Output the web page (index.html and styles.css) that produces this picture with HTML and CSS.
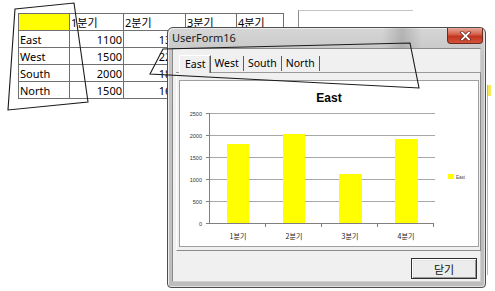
FILE: index.html
```html
<!DOCTYPE html>
<html lang="ko">
<head>
  <meta charset="UTF-8">
  <title>UserForm16</title>
  <link rel="stylesheet" href="styles.css">
</head>
<body>

  <div class="sheet">
    <table class="grid">
      <colgroup>
        <col class="c-a"><col class="c-b"><col class="c-c"><col class="c-d"><col class="c-e">
      </colgroup>
      <tr>
        <td class="corner"></td>
        <td>1분기</td>
        <td>2분기</td>
        <td>3분기</td>
        <td>4분기</td>
      </tr>
      <tr><td>East</td><td class="num">1100</td><td class="num">1300</td><td class="num"></td><td class="num"></td></tr>
      <tr><td>West</td><td class="num">1500</td><td class="num">2200</td><td class="num"></td><td class="num"></td></tr>
      <tr><td>South</td><td class="num">2000</td><td class="num">1800</td><td class="num"></td><td class="num"></td></tr>
      <tr><td>North</td><td class="num">1500</td><td class="num">1600</td><td class="num"></td><td class="num"></td></tr>
    </table>
  </div>

  <!-- objects on the sheet behind the form -->
  <div class="sheet-chart"></div>
  <div class="sheet-edge"></div>

  <div class="window">
    <div class="titlebar">
      <span class="title">UserForm16</span>
      <div class="close">
        <svg width="13" height="10" viewBox="0 0 13 10">
          <path d="M3 1.5 L10 8.5 M10 1.5 L3 8.5" stroke="#6b2118" stroke-width="3.2" stroke-linecap="square"/>
          <path d="M3 1.5 L10 8.5 M10 1.5 L3 8.5" stroke="#fff" stroke-width="1.8" stroke-linecap="square"/>
        </svg>
      </div>
    </div>

    <div class="client">
      <div class="multipage">
        <div class="tabs">
          <span class="tab active">East</span>
          <span class="tab">West</span>
          <span class="tab">South</span>
          <span class="tab">North</span>
        </div>
        <div class="page">
          <div class="chart">
            <svg width="300" height="166" viewBox="0 0 300 166">
              <text class="chart-title" x="150" y="22" text-anchor="middle">East</text>

              <g class="gridlines">
                <line x1="30" y1="33.5" x2="256" y2="33.5"/>
                <line x1="30" y1="55.5" x2="256" y2="55.5"/>
                <line x1="30" y1="77.5" x2="256" y2="77.5"/>
                <line x1="30" y1="99.5" x2="256" y2="99.5"/>
                <line x1="30" y1="121.5" x2="256" y2="121.5"/>
              </g>

              <g class="bars">
                <rect x="48" y="64" width="22" height="79"/>
                <rect x="104" y="54" width="22" height="89"/>
                <rect x="160" y="94" width="23" height="49"/>
                <rect x="216" y="59" width="23" height="84"/>
              </g>

              <g class="axis">
                <line x1="30.5" y1="33" x2="30.5" y2="143"/>
                <line x1="30" y1="143.5" x2="255" y2="143.5"/>
                <line x1="27" y1="33.5" x2="30" y2="33.5"/>
                <line x1="27" y1="55.5" x2="30" y2="55.5"/>
                <line x1="27" y1="77.5" x2="30" y2="77.5"/>
                <line x1="27" y1="99.5" x2="30" y2="99.5"/>
                <line x1="27" y1="121.5" x2="30" y2="121.5"/>
                <line x1="27" y1="143.5" x2="30" y2="143.5"/>
                <line x1="86.5" y1="143" x2="86.5" y2="147"/>
                <line x1="142.5" y1="143" x2="142.5" y2="147"/>
                <line x1="198.5" y1="143" x2="198.5" y2="147"/>
                <line x1="254.5" y1="143" x2="254.5" y2="147"/>
              </g>

              <g class="ylabels" text-anchor="end">
                <text x="23" y="35.5">2500</text>
                <text x="23" y="57.5">2000</text>
                <text x="23" y="79.5">1500</text>
                <text x="23" y="101.5">1000</text>
                <text x="23" y="123.5">500</text>
                <text x="23" y="145.5">0</text>
              </g>

              <g class="xlabels" text-anchor="middle">
                <text x="59" y="159">1분기</text>
                <text x="115" y="159">2분기</text>
                <text x="171" y="159">3분기</text>
                <text x="227" y="159">4분기</text>
              </g>

              <rect class="legend-key" x="269" y="94" width="6" height="5"/>
              <text class="legend" x="277" y="99">East</text>
            </svg>
          </div>
        </div>
      </div>

      <div class="footer">
        <button class="btn">닫기</button>
      </div>
    </div>
  </div>

  <!-- pen marks drawn over the screenshot -->
  <svg class="marks" width="495" height="291" viewBox="0 0 495 291">
    <polygon points="15,9 74,3 88,102 8,110"/>
    <polygon points="150,74 163,49 410,43 419,88"/>
  </svg>

</body>
</html>
```

FILE: styles.css
```css
* {
  box-sizing: border-box;
}

body {
  margin: 0;
  width: 495px;
  height: 291px;
  overflow: hidden;
  position: relative;
  background: #fff;
  font-family: "Noto Sans", "Noto Sans CJK KR", sans-serif;
  color: #000;
}

/* Sheet */
.sheet {
  padding: 13px 0 0 18px;
}

.grid {
  border-collapse: collapse;
  table-layout: fixed;
  width: 265px;
  font-size: 11px;
}

.c-a { width: 51px; }
.c-b { width: 54px; }
.c-c { width: 62px; }
.c-d { width: 51px; }
.c-e { width: 47px; }

.grid td {
  border: 1px solid #6f6f6f;
  height: 17px;
  padding: 0 1px;
  line-height: 15px;
  white-space: nowrap;
  overflow: hidden;
}

.grid td.corner {
  background: #ffff00;
}

.grid td.num {
  text-align: right;
}

.sheet-chart {
  position: absolute;
  left: 298px;
  top: 10px;
  width: 115px;
  height: 40px;
  border-top: 1px solid #c4c4c4;
  border-left: 1px solid #8c8c8c;
}

.sheet-edge {
  position: absolute;
  left: 487px;
  top: 85px;
  width: 4px;
  height: 190px;
  border-left: 1px solid #b8b8b8;
  background: linear-gradient(#f2e85a 0, #f2e85a 11px, transparent 11px);
}

/* Form window */
.window {
  position: absolute;
  left: 167px;
  top: 27px;
  width: 319px;
  height: 261px;
  display: flex;
  flex-direction: column;
  padding: 0 4px 5px 4px;
  border: 1px solid #4e4e4e;
  border-radius: 6px 6px 4px 4px;
  background: linear-gradient(#d6d6d6, #c4c4c4 30px, #bdbdbd);
  box-shadow: inset 1px 1px 0 #ececec, inset -1px -1px 0 #e2e2e2;
}

.titlebar {
  height: 20px;
  flex: none;
  display: flex;
  align-items: center;
  position: relative;
  background: linear-gradient(90deg, transparent 0, transparent 210px, rgba(120,120,120,0.35) 230px, transparent 250px);
}

.title {
  font-size: 11px;
  color: #1a1a1a;
  margin-top: -1px;
}

.close {
  position: absolute;
  right: -2px;
  top: 0;
  width: 36px;
  height: 16px;
  display: flex;
  align-items: center;
  justify-content: center;
  border: 1px solid #6e2a22;
  border-top: none;
  border-radius: 0 0 4px 4px;
  background: linear-gradient(#e8a99c, #d55a44 45%, #c1341e 55%, #d2533a);
}

.client {
  flex: 1;
  display: flex;
  flex-direction: column;
  background: #f0f0f0;
  border: 1px solid #8b8b8b;
  border-right-color: #cfcfcf;
  border-bottom-color: #cfcfcf;
  padding: 5px 0 0 3px;
}

/* MultiPage */
.multipage {
  width: 305px;
}

.tabs {
  display: flex;
  align-items: flex-end;
  height: 19px;
  padding-left: 3px;
  border-bottom: 1px solid #9a9a9a;
  font-size: 10.5px;
}

.tab {
  height: 15px;
  line-height: 14px;
  padding: 0 4px;
  border-right: 1px solid #5c5c5c;
  margin-bottom: 1px;
}

.tab.active {
  height: 18px;
  line-height: 16px;
  padding: 0 4px 0 5px;
  margin-bottom: -1px;
  background: #f0f0f0;
  border: 1px solid #fff;
  border-right-color: #5c5c5c;
  border-bottom: none;
  box-shadow: inset -1px 0 0 #a0a0a0;
}

.page {
  height: 178px;
  padding: 7px 2px 3px 2px;
  border-left: 1px solid #fff;
  border-right: 1px solid #8b8b8b;
  border-bottom: 1px solid #8b8b8b;
}

.chart {
  width: 300px;
  height: 167px;
  background: #fff;
  border: 1px solid #9f9f9f;
}

.chart svg {
  display: block;
  margin: -1px 0 0 -1px;
}

.chart-title {
  font-family: "Liberation Sans", sans-serif;
  font-weight: bold;
  font-size: 12px;
  fill: #000;
}

.gridlines line {
  stroke: #a8a8a8;
  stroke-width: 1;
}

.axis line {
  stroke: #808080;
  stroke-width: 1;
}

.bars rect,
.legend-key {
  fill: #ffff00;
}

.ylabels text {
  font-family: "Liberation Sans", sans-serif;
  font-size: 5.5px;
  fill: #333;
}

.xlabels text {
  font-family: "Noto Sans CJK KR", sans-serif;
  font-size: 7px;
  fill: #222;
}

.legend {
  font-family: "Liberation Sans", sans-serif;
  font-size: 4.5px;
  fill: #444;
}

.footer {
  flex: 1;
  display: flex;
  justify-content: flex-end;
  align-items: flex-end;
  padding: 0 3px 2px 0;
}

.btn {
  width: 66px;
  height: 21px;
  padding: 0;
  font-family: "Noto Sans CJK KR", sans-serif;
  font-size: 11px;
  color: #111;
  background: #ececec;
  border: 1px solid #2f2f2f;
  box-shadow: inset 1px 1px 0 #fff, inset -1px -1px 0 #9a9a9a, inset 2px 2px 0 #e4e4e4;
}

/* pen marks */
.marks {
  position: absolute;
  left: 0;
  top: 0;
  pointer-events: none;
}

.marks polygon {
  fill: none;
  stroke: #1a1a1a;
  stroke-width: 1.1;
}
```
